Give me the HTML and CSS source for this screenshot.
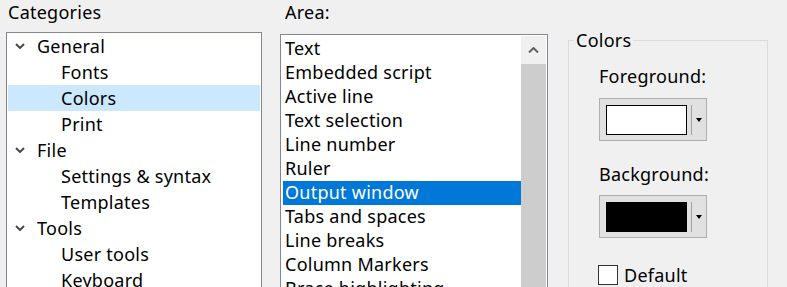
FILE: index.html
```
<!DOCTYPE html>
<html lang="en">
<head>
    <meta charset="UTF-8">
    <title>Options - Colors</title>
    <link rel="stylesheet" href="styles.css">
</head>
<body>
    <div class="dialog">
        <section class="col-cat">
            <div class="label cat-label">Categories</div>
            <ul class="tree">
                <li class="node"><span class="chev"><svg width="10" height="6" viewBox="0 0 10 6"><path d="M1 1 L5 5 L9 1" fill="none" stroke="#4a4a4a" stroke-width="2"/></svg></span>General</li>
                <li class="leaf">Fonts</li>
                <li class="leaf selected">Colors</li>
                <li class="leaf">Print</li>
                <li class="node"><span class="chev"><svg width="10" height="6" viewBox="0 0 10 6"><path d="M1 1 L5 5 L9 1" fill="none" stroke="#4a4a4a" stroke-width="2"/></svg></span>File</li>
                <li class="leaf">Settings &amp; syntax</li>
                <li class="leaf">Templates</li>
                <li class="node"><span class="chev"><svg width="10" height="6" viewBox="0 0 10 6"><path d="M1 1 L5 5 L9 1" fill="none" stroke="#4a4a4a" stroke-width="2"/></svg></span>Tools</li>
                <li class="leaf">User tools</li>
                <li class="leaf">Keyboard</li>
            </ul>
        </section>

        <section class="col-area">
            <div class="label area-label">Area:</div>
            <div class="listbox">
                <ul class="items">
                    <li>Text</li>
                    <li>Embedded script</li>
                    <li>Active line</li>
                    <li>Text selection</li>
                    <li>Line number</li>
                    <li>Ruler</li>
                    <li class="selected">Output window</li>
                    <li>Tabs and spaces</li>
                    <li>Line breaks</li>
                    <li>Column Markers</li>
                    <li>Brace highlighting</li>
                </ul>
                <div class="scrollbar">
                    <div class="sb-up"><svg width="11" height="6" viewBox="0 0 11 6"><path d="M1 5.5 L5.5 1 L10 5.5" fill="none" stroke="#606060" stroke-width="2"/></svg></div>
                    <div class="sb-thumb"></div>
                </div>
            </div>
        </section>

        <fieldset class="colors">
            <legend>Colors</legend>
            <div class="colors-body">
                <div class="label">Foreground:</div>
                <div class="color-btn fg-btn">
                    <span class="swatch white"></span>
                    <span class="sep"></span>
                    <span class="arrow"></span>
                </div>
                <div class="label bg-label">Background:</div>
                <div class="color-btn bg-btn">
                    <span class="swatch black"></span>
                    <span class="sep"></span>
                    <span class="arrow"></span>
                </div>
                <label class="check"><span class="box"></span>Default</label>
            </div>
        </fieldset>
    </div>
</body>
</html>
```

FILE: styles.css
```
body {
    margin: 0;
    height: 287px;
    overflow: hidden;
    background: #f0f0f0;
    font-family: "Noto Sans", sans-serif;
    font-size: 18px;
    letter-spacing: 0.25px;
    color: #000;
}

.dialog {
    display: flex;
    align-items: flex-start;
    padding-left: 6px;
}

.label {
    line-height: 24px;
    white-space: nowrap;
}

/* categories tree */
.col-cat {
    width: 256px;
}

.cat-label {
    padding-left: 2px;
    margin-bottom: 8px;
}

.tree {
    list-style: none;
    margin: 0;
    padding: 0 1px;
    height: 260px;
    background: #fff;
    border: 1px solid #828790;
}

.tree li {
    height: 26px;
    line-height: 26px;
    white-space: nowrap;
}

.tree .node {
    display: flex;
    align-items: center;
    padding-left: 7px;
}

.tree .chev {
    display: flex;
    width: 22px;
}

.tree .leaf {
    padding-left: 53px;
}

.tree .selected {
    background: #cce8ff;
}

/* area list */
.col-area {
    width: 268px;
    margin-left: 18px;
}

.area-label {
    padding-left: 5px;
    margin-bottom: 10px;
}

.listbox {
    display: flex;
    height: 260px;
    padding: 1px;
    background: #fff;
    border: 1px solid #828790;
}

.items {
    list-style: none;
    flex: 1;
    margin: 1px 0 0 1px;
    padding: 0;
}

.items li {
    height: 24px;
    line-height: 22px;
    padding-left: 2px;
    white-space: nowrap;
}

.items .selected {
    background: #0078d7;
    color: #fff;
}

.scrollbar {
    width: 25px;
    display: flex;
    flex-direction: column;
}

.sb-up {
    height: 28px;
    background: #f0f0f0;
    display: flex;
    align-items: center;
    justify-content: center;
}

.sb-thumb {
    flex: 1;
    background: #cdcdcd;
}

/* colors group */
.colors {
    width: 200px;
    height: 300px;
    margin: 28px 0 0 20px;
    padding: 0;
    border: 1px solid #dcdcdc;
    box-sizing: border-box;
}

.colors legend {
    margin-left: 5px;
    padding: 0 2px;
    line-height: 24px;
}

.colors-body {
    padding: 12px 0 0 30px;
}

.color-btn {
    display: flex;
    align-items: center;
    width: 108px;
    height: 43px;
    margin-top: 10px;
    padding: 0 0 0 6px;
    border: 1px solid #adadad;
    background: #e1e1e1;
    box-sizing: border-box;
}

.swatch {
    width: 81px;
    height: 30px;
    border: 1px solid #000;
    box-sizing: border-box;
}

.swatch.white {
    background: #fff;
}

.swatch.black {
    background: #000;
}

.sep {
    width: 1px;
    height: 30px;
    margin-left: 4px;
    background: #a0a0a0;
}

.arrow {
    margin-left: 4px;
    width: 0;
    height: 0;
    border-left: 3.5px solid transparent;
    border-right: 3.5px solid transparent;
    border-top: 4px solid #000;
}

.bg-label {
    margin-top: 21px;
}

.bg-btn {
    margin-top: 9px;
}

.check {
    display: flex;
    align-items: center;
    margin-top: 27px;
    margin-left: -1px;
    line-height: 20px;
}

.check .box {
    width: 20px;
    height: 20px;
    margin-right: 6px;
    border: 1px solid #333;
    background: #fff;
    box-sizing: border-box;
}
```
